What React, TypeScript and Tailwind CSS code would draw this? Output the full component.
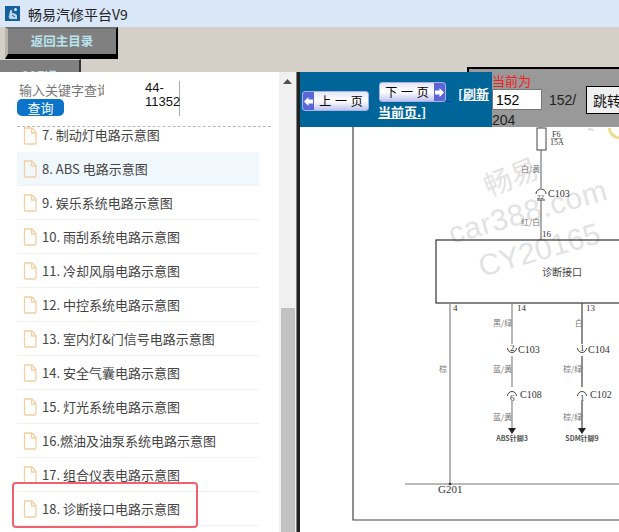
import React from "react";

const items = [
  "7. 制动灯电路示意图",
  "8. ABS 电路示意图",
  "9. 娱乐系统电路示意图",
  "10. 雨刮系统电路示意图",
  "11. 冷却风扇电路示意图",
  "12. 中控系统电路示意图",
  "13. 室内灯&门信号电路示意图",
  "14. 安全气囊电路示意图",
  "15. 灯光系统电路示意图",
  "16.燃油及油泵系统电路示意图",
  "17. 组合仪表电路示意图",
  "18. 诊断接口电路示意图",
];

const FONT = "font-['Noto_Sans_CJK_SC','Noto_Sans',sans-serif]";

function DocIcon() {
  return (
    <svg width="14" height="18" viewBox="0 0 14 18" fill="none" stroke="#f3cfa3" strokeWidth="1.3" className="shrink-0">
      <path d="M1.5 1H9L13 5.5V16a1 1 0 0 1-1 1H2.5a1 1 0 0 1-1-1Z" />
      <path d="M8.5 1V6H13" />
    </svg>
  );
}

function PageButton({ label, dir }: { label: string; dir: "left" | "right" }) {
  const arrow = (
    <span className="flex h-full w-[11px] shrink-0 items-center justify-center bg-[#5a66d8]">
      <svg width="9" height="9" viewBox="0 0 9 9" fill="white">
        {dir === "left" ? <path d="M0 4.5 4.5 0v2.5H9v4H4.5V9Z" /> : <path d="M9 4.5 4.5 0v2.5H0v4h4.5V9Z" />}
      </svg>
    </span>
  );
  return (
    <span className="flex h-[20px] w-[67px] shrink-0 items-center overflow-hidden rounded-[3px] border border-[#aab0e8] bg-gradient-to-b from-[#e6e6f8] via-[#ffffff] to-[#c0c5ee]">
      {dir === "left" && arrow}
      <span className="flex-1 text-center text-[12px] leading-none font-normal whitespace-nowrap text-black [word-spacing:1px]">{label}</span>
      {dir === "right" && arrow}
    </span>
  );
}

function Diagram() {
  const serif = "'Liberation Serif','Noto Sans CJK SC',serif";
  const small = { fontFamily: "'Noto Sans CJK SC',sans-serif", fontSize: 8, fill: "#777" };
  const pin = { fontFamily: serif, fontSize: 9, fill: "#333" };
  const conn = { fontFamily: serif, fontSize: 10, fill: "#333" };
  return (
    <svg width="319" height="405" viewBox="300 127 319 405" className="block bg-white">
      <path d="M353 127V520H619" fill="none" stroke="#444" strokeWidth="1.2" />

      <g fill="#e3e3e3" fontFamily="'Liberation Sans','Noto Sans CJK SC',sans-serif">
        <text x="0" y="0" fontSize="28" transform="translate(489 197) rotate(-22)" fontFamily="'Noto Sans CJK SC',sans-serif">畅易</text>
        <text x="0" y="0" fontSize="30" letterSpacing="0.7" transform="translate(452 244) rotate(-16)">car388.com</text>
        <text x="0" y="0" fontSize="30" transform="translate(482 277) rotate(-16)">CY20165</text>
      </g>

      <path d="M541 127V240" stroke="#777" strokeWidth="1.2" />
      <rect x="537" y="128" width="9" height="22" fill="white" stroke="#444" />
      <text x="552" y="137" {...conn} fontSize="8">F6</text>
      <path d="M551 138.500H563" stroke="#666" strokeWidth="0.6" />
      <text x="550" y="145" {...conn} fontSize="8">15A</text>
      <text x="521" y="172" {...small}>白/黄</text>
      <rect x="536" y="188" width="10" height="12" fill="white" />
      <path d="M536 194a5 5 0 0 1 10 0" fill="none" stroke="#444" />
      <text x="537" y="199" {...pin} fontSize="7">22</text>
      <path d="M537 200H545" stroke="#444" />
      <text x="548" y="197" {...conn}>C103</text>
      <text x="521" y="225" {...small}>红/白</text>
      <text x="542" y="237" {...pin}>16</text>
      <rect x="436" y="240" width="190" height="63" fill="none" stroke="#333" strokeWidth="1.2" />
      <text x="542" y="276" fontFamily="'Noto Sans CJK SC',sans-serif" fontSize="10" fill="#444">诊断接口</text>

      <path d="M450 303V484" stroke="#999" strokeWidth="1.4" />
      <path d="M512 303V433" stroke="#888" strokeWidth="1.2" />
      <path d="M582 303V433" stroke="#444" strokeWidth="1.2" />
      <text x="453" y="311" {...pin}>4</text>
      <text x="517" y="311" {...pin}>14</text>
      <text x="586" y="311" {...pin}>13</text>
      <text x="493" y="326" {...small}>黑/绿</text>
      <text x="575" y="326" {...small}>白</text>
      <text x="439" y="372" {...small}>棕</text>

      <rect x="506" y="344" width="12" height="12" fill="white" />
      <path d="M507.500 348a4.500 4.500 0 0 0 9 0" fill="none" stroke="#444" />
      <text x="510" y="351" {...pin}>2</text>
      <text x="518" y="353" {...conn}>C103</text>
      <rect x="576" y="344" width="12" height="12" fill="white" />
      <path d="M577.500 348a4.500 4.500 0 0 0 9 0" fill="none" stroke="#444" />
      <text x="580" y="351" {...pin}>1</text>
      <text x="588" y="353" {...conn}>C104</text>

      <text x="493" y="372" {...small}>蓝/黄</text>
      <text x="563" y="372" {...small}>棕/绿</text>

      <rect x="506" y="387" width="12" height="14" fill="white" />
      <path d="M507.500 396a4.500 4.500 0 0 1 9 0" fill="none" stroke="#444" />
      <text x="510" y="401" {...pin}>6</text>
      <text x="520" y="398" {...conn}>C108</text>
      <rect x="576" y="387" width="12" height="14" fill="white" />
      <path d="M577.500 396a4.500 4.500 0 0 1 9 0" fill="none" stroke="#444" />
      <text x="580" y="401" {...pin}>1</text>
      <text x="590" y="398" {...conn}>C102</text>

      <text x="493" y="420" {...small}>蓝/黄</text>
      <text x="563" y="420" {...small}>棕/绿</text>

      <path d="M508 428H516L512 434Z" fill="#222" />
      <path d="M578 428H586L582 434Z" fill="#222" />
      <text x="512" y="441" textAnchor="middle" fontFamily="'Noto Sans CJK SC',sans-serif" fontSize="7" fontWeight="700" fill="#555">ABS针脚3</text>
      <text x="582" y="441" textAnchor="middle" fontFamily="'Noto Sans CJK SC',sans-serif" fontSize="7" fontWeight="700" fill="#555">SDM针脚9</text>

      <path d="M405 484H619" stroke="#777" strokeWidth="1.2" />
      <circle cx="450" cy="484" r="1.300" fill="#333" />
      <text x="438" y="493" {...conn} fontSize="11">G201</text>

      <path d="M609 128c1 6 5 9 10 10" fill="none" stroke="#ecdc8e" strokeWidth="3" />
      <path d="M588 129l6 1" stroke="#ddd" strokeWidth="2" />
    </svg>
  );
}

export default function App() {
  return (
    <div className={`flex h-[532px] w-[619px] flex-col overflow-hidden bg-[#d4d0c8] ${FONT}`}>
      <div className="flex h-[27px] shrink-0 items-center gap-[8px] bg-[#d9e7f8] pl-[5px]">
        <svg width="15" height="15" viewBox="0 0 15 15">
          <rect width="15" height="15" fill="#14609f" />
          <path d="M5 5c1-2 2-1 2 0v2c2 0 5 1 5 3v3H5c-1-1-2-2-1-3Z" fill="#dcebf5" fillOpacity="0.85" />
          <circle cx="10.500" cy="3.500" r="1.500" fill="#dcebf5" />
          <path d="M7 9l3 2" stroke="#14609f" />
        </svg>
        <span className="text-[14px] leading-none text-[#222]">畅易汽修平台V9</span>
      </div>

      <div className="flex h-[45px] shrink-0 flex-col overflow-hidden">
        <div className="relative">
          <div className="ml-[5px] flex h-[32px] w-[113px] items-center justify-center border-t-[2px] border-r-[2px] border-b-[5px] border-l-[3px] border-t-[#6e6e6e] border-r-black border-b-black border-l-[#b8b4ac] bg-[#808080] text-[12.500px] font-bold text-[#b9e4ee]">
            返回主目录
          </div>
          <div className="absolute top-[40px] left-[467px] h-[6px] w-[152px] border-t-2 border-l-2 border-black bg-[#999]" />
        </div>
        <div className="flex h-[32px] w-[81px] items-start justify-center border-t border-r-[2px] border-t-[#d4d0c8] border-r-[#333] bg-[#808080] pt-[6px] text-[13px] font-bold text-[#b9e4ee]">
          11F退
        </div>
      </div>

      <div className="flex min-h-0 flex-1">
        <div className="relative flex w-[279px] shrink-0 flex-col overflow-hidden bg-white">
          <div className="flex h-[54px] shrink-0 pt-[9px]">
            <div className="ml-[17px] w-[88px]">
              <div className="ml-[2px] h-[18px] w-[85px] overflow-hidden text-[13px] leading-[18px] whitespace-nowrap text-[#777]">
                输入关键字查询
              </div>
              <button className="flex h-[17px] w-[47px] items-center justify-center rounded-[5px] bg-[#0b74c9] text-[13px] leading-none text-white">
                查询
              </button>
            </div>
            <div className="ml-[40px] h-[35px] w-[35px] border-r border-[#aaa] text-[13px] leading-[14px] text-[#111] font-['Liberation_Sans',sans-serif]">
              44-
              <br />
              11352
            </div>
          </div>
          <div className="mr-[8px] ml-[17px] shrink-0 border-t border-dashed border-[#bbb]" />
          <div className="min-h-0 flex-1">
            {items.map((t, i) => (
              <div
                key={t}
                className={
                  i === 0
                    ? "ml-[17px] flex h-[25px] w-[242px] items-start gap-[5px] pl-[6px]"
                    : i === 1
                      ? "ml-[17px] flex h-[34px] w-[242px] items-center gap-[5px] border-b border-[#f1f1f1] bg-[#f0f7fd] pl-[6px]"
                      : "ml-[17px] flex h-[34px] w-[242px] items-center gap-[5px] border-b border-[#f1f1f1] pl-[6px]"
                }
              >
                <DocIcon />
                <span className={i === 0 ? "mt-[1px] text-[13px] leading-none whitespace-nowrap text-[#444]" : "text-[13px] leading-none whitespace-nowrap text-[#444]"}>{t}</span>
              </div>
            ))}
          </div>
          <div className="absolute top-[410px] left-[12px] h-[46px] w-[186px] rounded-[4px] border-[2px] border-[#f2606f]" />
        </div>

        <div className="flex w-[17px] shrink-0 flex-col items-center bg-[#f0f0f0] pt-[7px]">
          <svg width="9" height="5" viewBox="0 0 9 5" className="shrink-0">
            <path d="M4.500 0 9 5H0Z" fill="#505050" />
          </svg>
          <div className="mt-[224px] h-[224px] w-[14px] shrink-0 bg-[#c2c2c2]" />
        </div>
        <div className="w-[1px] shrink-0 bg-[#808080]" />
        <div className="w-[3px] shrink-0 bg-[#222]" />

        <div className="flex min-w-0 flex-1 flex-col">
          <div className="flex h-[55px] shrink-0">
            <div className="w-[192px] shrink-0 bg-[#006699] text-[13px] leading-[18px] font-bold text-white">
              <div className="flex h-[36px] items-start pl-[2px]">
                <div className="mt-[19px]"><PageButton label="上 一 页" dir="left" /></div>
                <div className="mt-[10px] ml-[10px] flex items-end"><PageButton label="下 一 页" dir="right" /><span className="h-[1px] w-[5px] bg-[#0033cc]" /></div>
                <span className="mt-[13px] ml-[7px] whitespace-nowrap underline">[刷新</span>
              </div>
              <div className="-mt-[5px] pl-[78px] underline">当前页.]</div>
            </div>
            <div className="relative flex-1 bg-[#999] text-[14px] leading-[18px] text-[#222]">
              <div className="text-[13px] leading-[17px] text-[#f02020]">当前为</div>
              <div className="flex items-center">
                <div className="h-[21px] w-[50px] border border-[#777] bg-white pl-[3px] text-[14px] leading-[20px] text-black font-['Liberation_Sans',sans-serif]">152</div>
                <span className="ml-[7px] font-['Liberation_Sans',sans-serif]">152/</span>
              </div>
              <div className="pt-[1px] font-['Liberation_Sans',sans-serif]">204</div>
              <div className="absolute top-[14px] left-[94px] flex h-[28px] w-[50px] items-center border border-black bg-[#f0f0f0] pl-[6px] text-[14px] whitespace-nowrap text-[#111]">跳转</div>
            </div>
          </div>
          <Diagram />
        </div>
      </div>
    </div>
  );
}
